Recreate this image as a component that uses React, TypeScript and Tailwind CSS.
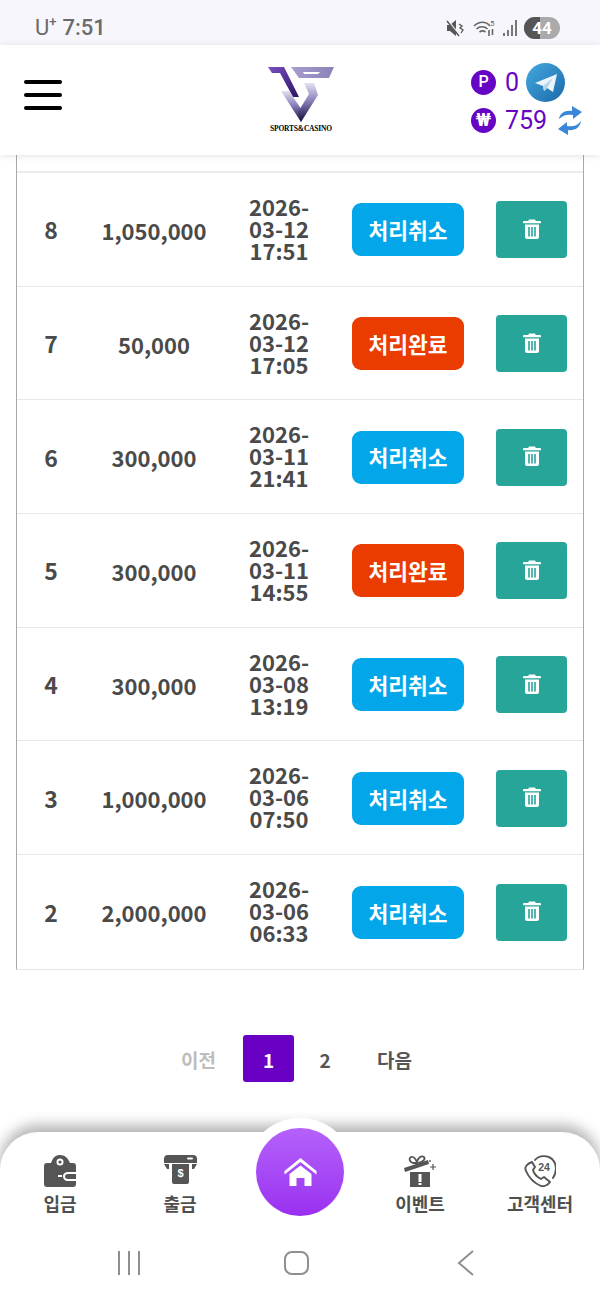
const font = { fontFamily: '"Noto Sans CJK KR", "Noto Sans", sans-serif' };

const rows = [
  { no: 8, amount: '1,050,000', date: '03-12', time: '17:51', done: false },
  { no: 7, amount: '50,000', date: '03-12', time: '17:05', done: true },
  { no: 6, amount: '300,000', date: '03-11', time: '21:41', done: false },
  { no: 5, amount: '300,000', date: '03-11', time: '14:55', done: true },
  { no: 4, amount: '300,000', date: '03-08', time: '13:19', done: false },
  { no: 3, amount: '1,000,000', date: '03-06', time: '07:50', done: false },
  { no: 2, amount: '2,000,000', date: '03-06', time: '06:33', done: false },
];

function TrashIcon() {
  return (
    <svg width="18" height="20" viewBox="0 0 18 20" fill="#fff">
      <path d="M6 0.500h6l.8 1.500H17a.8.8 0 0 1 0 2.200H1A.8.8 0 0 1 1 2h4.200z" />
      <path fillRule="evenodd" d="M2 5.500h14v12.500a2 2 0 0 1-2 2H4a2 2 0 0 1-2-2zM5.200 8v9.500h1.600V8zm3 0v9.500h1.600V8zm3 0v9.500h1.600V8z" />
    </svg>
  );
}

function Logo() {
  return (
    <svg width="66" height="56" viewBox="0 0 66 56">
      <defs>
        <linearGradient id="lg1" x1="0" y1="0" x2="1" y2="1">
          <stop offset="0" stopColor="#7a4fc4" />
          <stop offset="1" stopColor="#2a1560" />
        </linearGradient>
        <linearGradient id="lg2" x1="0" y1="0" x2="0" y2="1">
          <stop offset="0" stopColor="#e4e1f0" />
          <stop offset="0.45" stopColor="#8c80bd" />
          <stop offset="1" stopColor="#150b3a" />
        </linearGradient>
        <linearGradient id="lg3" x1="0" y1="0" x2="1" y2="0">
          <stop offset="0" stopColor="#a79dcf" />
          <stop offset="1" stopColor="#8d82b8" />
        </linearGradient>
      </defs>
      <polygon points="0,0 16,0 31,30 25,30 12,6 4,6" fill="url(#lg1)" />
      <polygon points="23,0 66,0 61,11 31,11" fill="url(#lg3)" />
      <polygon points="35,5 52,5 50,7 36,7" fill="#fff" />
      <polygon points="13,24 21,24 36,46 33,55" fill="url(#lg2)" />
      <polygon points="36,16 46,16 50,28 33,55 30,45 41,27" fill="url(#lg2)" />
    </svg>
  );
}

function WalletIcon() {
  return (
    <svg width="32" height="32" viewBox="0 0 32 32" fill="#555">
      <path d="M7 8 C9 2 12 0 16 0 C21 0 24 3 26 8 L29 8 C31 8 32 9 32 11 L32 17 L24 17 C20 17 19 20 19 21 C19 24 21 26 24 26 L32 26 L32 29 C32 31 31 32 29 32 L3 32 C1 32 0 31 0 29 L0 11 C0 9 1 8 3 8z" />
      <path d="M24 19 L32 19 L32 24 L24 24 C22 24 21 23 21 21.500 C21 20 22 19 24 19z" />
      <circle cx="16" cy="7" r="3.500" fill="#fff" />
      <circle cx="16" cy="7" r="1.600" fill="#555" />
      <rect x="14" y="20" width="4" height="2" fill="#fff" />
    </svg>
  );
}

function AtmIcon() {
  return (
    <svg width="33" height="29" viewBox="0 0 33 29" fill="#555">
      <path d="M4 0h25a4 4 0 0 1 4 4v4H0V4a4 4 0 0 1 4-4z" />
      <rect x="23" y="2.500" width="6" height="2" rx="1" fill="#fff" />
      <path d="M0 9h5v5H3z M33 9h-5v5h2z" />
      <path d="M8 9h17v18a2 2 0 0 1-2 2H10a2 2 0 0 1-2-2z" />
      <text x="16.500" y="22" textAnchor="middle" fontSize="11" fontWeight="700" fill="#fff" fontFamily="Liberation Sans">$</text>
    </svg>
  );
}

function GiftIcon() {
  return (
    <svg width="32" height="32" viewBox="0 0 32 32" fill="#555">
      <path d="M0 13 L24 5 L25 9 L1 17z" />
      <path d="M9 8 C4 6 5 1 9 2 C12 3 12 6 13 7 C14 3 17 0 20 2 C22 5 18 7 14 8z" fill="none" stroke="#555" strokeWidth="1.800" />
      <path d="M6 17 H26 V32 H6z" />
      <rect x="14.500" y="19" width="3" height="8" fill="#fff" />
      <rect x="14.500" y="28" width="3" height="2" fill="#fff" />
      <path d="M29 9v6M26 12h6" stroke="#555" strokeWidth="1.200" />
      <circle cx="26" cy="6" r="0.900" />
    </svg>
  );
}

function CallIcon() {
  return (
    <svg width="32" height="32" viewBox="0 0 32 32" fill="none">
      <path d="M8 7 C3 9 0 12 2 16 C5 23 10 28 17 31 C20 32 24 30 26 27 L20 22 L17 24 C13 22 10 19 9 15 L11 12z" stroke="#555" strokeWidth="1.900" strokeLinejoin="round" />
      <path d="M11 5 C15 0 24 0 28 4 C33 9 33 17 29 23" stroke="#555" strokeWidth="1.900" strokeLinecap="round" />
      <text x="20" y="16" textAnchor="middle" fontSize="10.500" fontWeight="700" fill="#555" fontFamily="Liberation Sans">24</text>
    </svg>
  );
}

export default function App() {
  return (
    <div style={font} className="w-[600px] h-[1301px] bg-white overflow-hidden flex flex-col">
      {/* status bar */}
      <div className="h-[45px] shrink-0 bg-[#f7f6fd] flex items-center justify-between pl-[35px] pr-[40px] pt-[11px]">
        <div className="flex items-center text-[#6b6b6b] text-[22px] font-medium leading-none" style={{ fontFamily: 'Roboto, sans-serif' }}>
          <span className="font-normal">U</span>
          <span className="text-[13px] self-start -mt-[2px]">+</span>
          <span className="ml-[6px]">7:51</span>
        </div>
        <div className="flex items-center gap-[6px]">
          <svg className="mr-[3px]" width="18" height="18" viewBox="0 0 18 18" fill="#555">
            <path d="M1 6h3l6-5v16l-6-5H1z" />
            <path d="M1 1l13 16" stroke="#f7f6fd" strokeWidth="2" />
            <path d="M1 2l12 15" stroke="#555" strokeWidth="1.400" />
            <path d="M13 5l3 2-2 2 3 2-2 3" stroke="#555" strokeWidth="1.300" fill="none" />
          </svg>
          <svg width="24" height="18" viewBox="0 0 24 18" fill="none" stroke="#666" strokeWidth="1.600">
            <path d="M1 7c5-5 12-5 16 0M3.500 10c3-3 8-3 11 0M6.500 13c2-1.500 4-1.500 6 0" />
            <text x="17" y="6.500" fontSize="8" fill="#666" stroke="none" fontFamily="Roboto">5</text>
            <path d="M16 11v6M19.500 16v-6" />
          </svg>
          <svg width="15" height="16" viewBox="0 0 15 16" fill="#777">
            <rect x="0" y="13" width="2" height="3" />
            <rect x="4" y="10" width="2" height="6" />
            <rect x="8" y="5" width="2" height="11" />
            <rect x="12" y="0" width="2" height="16" />
          </svg>
          <div className="relative w-[36px] h-[22px] rounded-full overflow-hidden flex bg-[#aaaaaa]">
            <div className="w-[16px] h-full bg-[#555555]" />
            <span className="absolute inset-0 flex items-center justify-center text-white text-[17px] font-bold leading-none" style={{ fontFamily: 'Roboto, sans-serif' }}>44</span>
          </div>
        </div>
      </div>

      {/* header */}
      <header className="relative z-10 h-[110px] shrink-0 bg-white shadow-[0_1px_6px_rgba(0,0,0,0.12)] flex items-center justify-between pl-[24px] pr-[18px]">
        <div className="flex flex-col gap-[9px] w-[38px] -mt-[11px]">
          <div className="h-[4px] rounded-full bg-black" />
          <div className="h-[4px] rounded-full bg-black" />
          <div className="h-[4px] rounded-full bg-black" />
        </div>
        <div className="absolute left-[268px] top-[22px] flex flex-col items-center w-[66px]">
          <Logo />
          <span className="mt-[2px] text-[7.500px] font-bold leading-none text-black tracking-tight whitespace-nowrap" style={{ fontFamily: '"Liberation Serif", serif' }}>SPORTS&amp;CASINO</span>
        </div>
        <div className="flex flex-col gap-[4px] -mt-[2px]">
          <div className="flex items-center h-[39px]">
            <span className="w-[25px] h-[25px] rounded-full bg-[#6606c4] text-white text-[16px] font-medium flex items-center justify-center" style={{ fontFamily: 'Roboto, sans-serif' }}>P</span>
            <span className="ml-[9px] w-[21px] text-[#6606c4] text-[25px] leading-none" style={{ fontFamily: 'Roboto, sans-serif' }}>0</span>
            <svg width="39" height="39" viewBox="0 0 39 39">
              <defs>
                <linearGradient id="tg" x1="0" y1="0" x2="1" y2="1">
                  <stop offset="0" stopColor="#45a8e0" />
                  <stop offset="1" stopColor="#1a6aa8" />
                </linearGradient>
              </defs>
              <circle cx="19.500" cy="19.500" r="19.500" fill="url(#tg)" />
              <path d="M9 20 L31 11 L27 29 L21 25 L18 28 L17 23z" fill="#eaf4fb" />
              <path d="M17 23 L27 15 L21 25 L18 28z" fill="#b6d4e8" />
            </svg>
          </div>
          <div className="flex items-center h-[30px]">
            <span className="w-[25px] h-[25px] rounded-full bg-[#6606c4] text-white text-[19px] font-bold flex items-center justify-center" style={{ fontFamily: 'Roboto, sans-serif' }}>₩</span>
            <span className="ml-[9px] w-[53px] text-[#6606c4] text-[25px] leading-none" style={{ fontFamily: 'Roboto, sans-serif' }}>759</span>
            <svg width="24" height="31" viewBox="0 0 24 31" fill="#3a86d8">
              <path d="M1 14 C2 8 7 5 14 6 L14 1 L24 7 L15 14 L15 10 C9 9 5 10 1 14z" />
              <path d="M23 16 C22 23 16 26 10 25 L10 30 L0 24 L9 17 L9 21 C15 22 19 21 23 16z" />
            </svg>
          </div>
        </div>
      </header>

      {/* table */}
      <main className="flex-1 min-h-0 flex flex-col">
        <div className="mx-[16px] border-x border-b border-x-[#a8a8a8] border-b-[#e5e5e5]">
          <div className="h-[18px] border-b-2 border-[#ececec]" />
          {rows.map((r) => (
            <div key={r.no} className="h-[113.700px] pt-[1px] border-b border-[#e8e8e8] last:border-b-0 flex items-center text-[#4a4a4a] font-semibold">
              <div className="w-[68px] text-center text-[23px] leading-none">{r.no}</div>
              <div className="w-[138px] text-center text-[22px] leading-none whitespace-nowrap">{r.amount}</div>
              <div className="w-[112px] -mt-[4px] text-center text-[22px] leading-[22px] flex flex-col items-center">
                <span>2026-</span>
                <span>{r.date}</span>
                <span>{r.time}</span>
              </div>
              <div className="w-[146px] pl-[17px]">
                <button className={`w-[112px] h-[53px] rounded-[9px] text-white text-[21.500px] font-bold leading-none ${r.done ? 'bg-[#ea3b00]' : 'bg-[#03a6e9]'}`}>
                  {r.done ? '처리완료' : '처리취소'}
                </button>
              </div>
              <div className="ml-[15px] w-[71px] h-[57px] rounded-[4px] bg-[#27a598] flex items-center justify-center pb-[2px]">
                <TrashIcon />
              </div>
            </div>
          ))}
        </div>

        {/* pagination */}
        <div className="mt-[65px] flex items-center justify-center text-[19px] font-semibold ml-[-7px]">
          <span className="mt-[3px] text-[#bdbdbd]">이전</span>
          <span className="ml-[27px] w-[51px] h-[47px] pt-[3px] rounded-[3px] bg-[#6a00c4] text-white font-bold flex items-center justify-center">1</span>
          <span className="mt-[3px] w-[62px] text-center text-[#555]">2</span>
          <span className="mt-[3px] ml-[21px] text-[#555]">다음</span>
        </div>
      </main>

      {/* bottom nav */}
      <nav className="relative shrink-0 h-[169px] bg-white rounded-t-[38px] shadow-[0_-7px_14px_rgba(0,0,0,0.3)]">
        <div className="absolute left-[246px] -top-[14px] w-[108px] h-[108px] rounded-full bg-white flex items-center justify-center">
          <div className="w-[88px] h-[88px] rounded-full bg-gradient-to-b from-[#b560fb] to-[#9a2ff0] flex items-center justify-center">
            <svg width="33" height="28" viewBox="0 0 32 28" fill="#fff">
              <path d="M0 13 L16 0 L32 13 L32 16.500 L16 4 L0 16.500z" />
              <path d="M5 16 L16 7.500 L27 16 V28 H20 V20 H12 V28 H5z" />
            </svg>
          </div>
        </div>
        <div className="flex pt-[23px] text-[#4f4f4f] text-[18px] font-bold leading-none">
          <div className="w-[120px] flex flex-col items-center gap-[7px]"><WalletIcon /><span>입금</span></div>
          <div className="w-[120px] flex flex-col items-center gap-[7px]"><AtmIcon /><span className="mt-[3px]">출금</span></div>
          <div className="w-[120px]" />
          <div className="w-[120px] flex flex-col items-center gap-[7px]"><GiftIcon /><span>이벤트</span></div>
          <div className="w-[120px] flex flex-col items-center gap-[7px]"><CallIcon /><span>고객센터</span></div>
        </div>
        <div className="mt-[37px] h-[28px] flex items-center">
          <div className="ml-[118px] flex gap-[8px]">
            <div className="w-[2px] h-[24px] bg-[#8f8f8f]" />
            <div className="w-[2px] h-[24px] bg-[#8f8f8f]" />
            <div className="w-[2px] h-[24px] bg-[#8f8f8f]" />
          </div>
          <div className="ml-[144px] w-[25px] h-[24px] rounded-[8px] border-[2.500px] border-[#8f8f8f]" />
          <svg className="ml-[148px]" width="18" height="26" viewBox="0 0 18 26" fill="none" stroke="#8f8f8f" strokeWidth="2">
            <path d="M16 1 L2 13 L16 25" />
          </svg>
        </div>
      </nav>
    </div>
  );
}
